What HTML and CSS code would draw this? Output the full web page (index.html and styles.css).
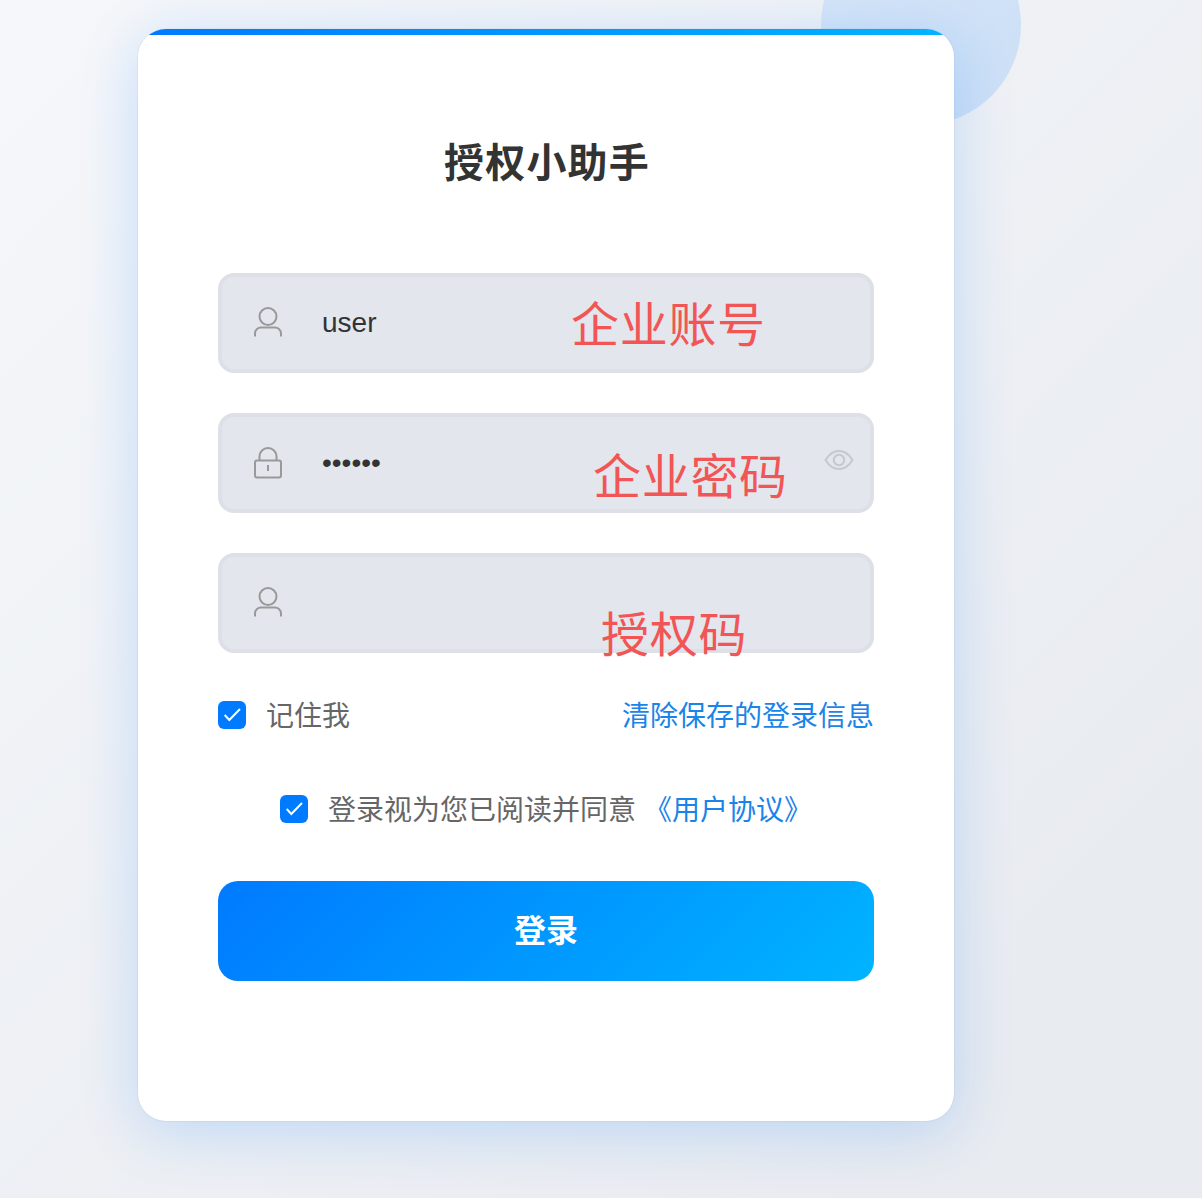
FILE: index.html
```html
<!DOCTYPE html>
<html lang="zh-CN">
<head>
    <meta charset="utf-8">
    <title>授权小助手</title>
    <link rel="stylesheet" href="styles.css">
</head>
<body>
    <div class="circle"></div>
    <div class="card">
        <h1 class="title">授权小助手</h1>

        <form class="form">
            <div class="field">
                <svg class="field-icon icon-user" viewBox="0 0 28 30"><circle cx="14" cy="9.5" r="8.5"/><path d="M1 29.5v-3a6 6 0 0 1 6-6h14a6 6 0 0 1 6 6v3"/></svg>
                <input class="field-input" type="text" value="user">
                <span class="note note-account">企业账号</span>
            </div>
            <div class="field">
                <svg class="field-icon" viewBox="0 0 28 32"><rect x="1" y="13.5" width="26" height="17" rx="2"/><path d="M5.5 13V9.5a8.5 8.5 0 0 1 17 0V13M14 18v6"/></svg>
                <input class="field-input" type="password" value="123456">
                <svg class="eye" viewBox="0 0 30 20"><path d="M1.5 10C5.5 3.5 10 1 15 1s9.5 2.5 13.5 9c-4 6.5-8.5 9-13.5 9s-9.5-2.5-13.5-9z"/><circle cx="15" cy="10" r="5.2"/></svg>
                <span class="note note-password">企业密码</span>
            </div>
            <div class="field">
                <svg class="field-icon icon-user" viewBox="0 0 28 30"><circle cx="14" cy="9.5" r="8.5"/><path d="M1 29.5v-3a6 6 0 0 1 6-6h14a6 6 0 0 1 6 6v3"/></svg>
                <input class="field-input" type="text">
                <span class="note note-code">授权码</span>
            </div>

            <div class="options">
                <label class="check-label">
                    <span class="check"><svg viewBox="0 0 28 28"><path d="M6.7 14l4.6 5L22 8"/></svg></span>
                    记住我
                </label>
                <a class="link" href="#">清除保存的登录信息</a>
            </div>

            <div class="agreement">
                <label class="check-label">
                    <span class="check"><svg viewBox="0 0 28 28"><path d="M6.7 14l4.6 5L22 8"/></svg></span>
                    登录视为您已阅读并同意
                </label>
                <a class="link agreement-link" href="#">《用户协议》</a>
            </div>

            <button class="submit" type="button">登录</button>
        </form>
    </div>
</body>
</html>
```

FILE: styles.css
```css
* { box-sizing: border-box; }
html, body { margin: 0; }
body {
    position: relative;
    height: 1198px;
    overflow: hidden;
    padding: 29px 0 0 138px;
    background: linear-gradient(135deg, #f5f7fa 0%, #e8ebf0 85%);
    font-family: "Liberation Sans", "Noto Sans CJK SC", sans-serif;
}
.circle {
    position: absolute;
    left: 821px;
    top: -75px;
    width: 200px;
    height: 200px;
    border-radius: 50%;
    background: linear-gradient(135deg, rgba(0, 122, 255, 0.1), rgba(0, 122, 255, 0.15));
}
.card {
    position: relative;
    width: 816px;
    height: 1092px;
    padding: 104px 80px 0;
    overflow: hidden;
    background: #fff;
    border-radius: 28px;
    box-shadow: 0 0 0 1px rgba(0, 0, 0, 0.03), 0 10px 60px rgba(0, 122, 255, 0.2);
}
.card::before {
    content: "";
    position: absolute;
    left: 0;
    top: 0;
    width: 100%;
    height: 6px;
    background: linear-gradient(90deg, #007aff, #00b4ff);
}
.title {
    margin: 0 0 80px;
    font-size: 40px;
    line-height: 60px;
    font-weight: 700;
    letter-spacing: 1.2px;
    text-indent: 2px;
    text-align: center;
    color: #333;
}
.form { display: flex; flex-direction: column; }
.field {
    position: relative;
    display: flex;
    align-items: center;
    gap: 40px;
    height: 100px;
    margin-bottom: 40px;
    padding: 0 32px;
    background: #e3e6ed;
    border: 4px solid #dde0e7;
    border-radius: 16px;
}
.field-icon {
    flex: none;
    width: 28px;
    fill: none;
    stroke: #999;
    stroke-width: 2;
}
.icon-user { margin-bottom: 2px; }
.field-input {
    flex: 1;
    min-width: 0;
    padding: 0;
    border: none;
    outline: none;
    background: transparent;
    font: 28px "Liberation Sans", "Noto Sans CJK SC", sans-serif;
    color: #333;
}
.eye {
    position: absolute;
    right: 16px;
    top: 33px;
    width: 30px;
    height: 20px;
    fill: none;
    stroke: #c4c8cf;
    stroke-width: 2;
}
.note {
    position: absolute;
    font-size: 48px;
    line-height: 60px;
    letter-spacing: 0.7px;
    color: #f25555;
    white-space: nowrap;
}
.note-account { left: 349px; top: 19px; }
.note-password { left: 371px; top: 31px; }
.note-code { left: 379px; top: 49px; }
.options {
    display: flex;
    justify-content: space-between;
    align-items: center;
    height: 40px;
    margin-top: 4px;
}
.check-label {
    display: flex;
    align-items: center;
    gap: 20px;
    font-size: 28px;
    line-height: 40px;
    color: #666;
}
.check {
    flex: none;
    width: 28px;
    height: 28px;
    margin-bottom: 4px;
    background: #007aff;
    border-radius: 6px;
}
.check svg {
    display: block;
    fill: none;
    stroke: #fff;
    stroke-width: 2;
}
.link {
    font-size: 28px;
    line-height: 40px;
    color: #1a84e8;
    text-decoration: none;
}
.agreement {
    display: flex;
    align-items: center;
    height: 40px;
    margin-top: 54px;
    padding-left: 62px;
}
.agreement-link { margin-left: 8px; }
.submit {
    height: 100px;
    margin-top: 50px;
    padding: 0 0 6px;
    border: none;
    border-radius: 20px;
    background: linear-gradient(135deg, #007aff, #00b4ff);
    font: 700 32px "Liberation Sans", "Noto Sans CJK SC", sans-serif;
    color: #fff;
}
```
